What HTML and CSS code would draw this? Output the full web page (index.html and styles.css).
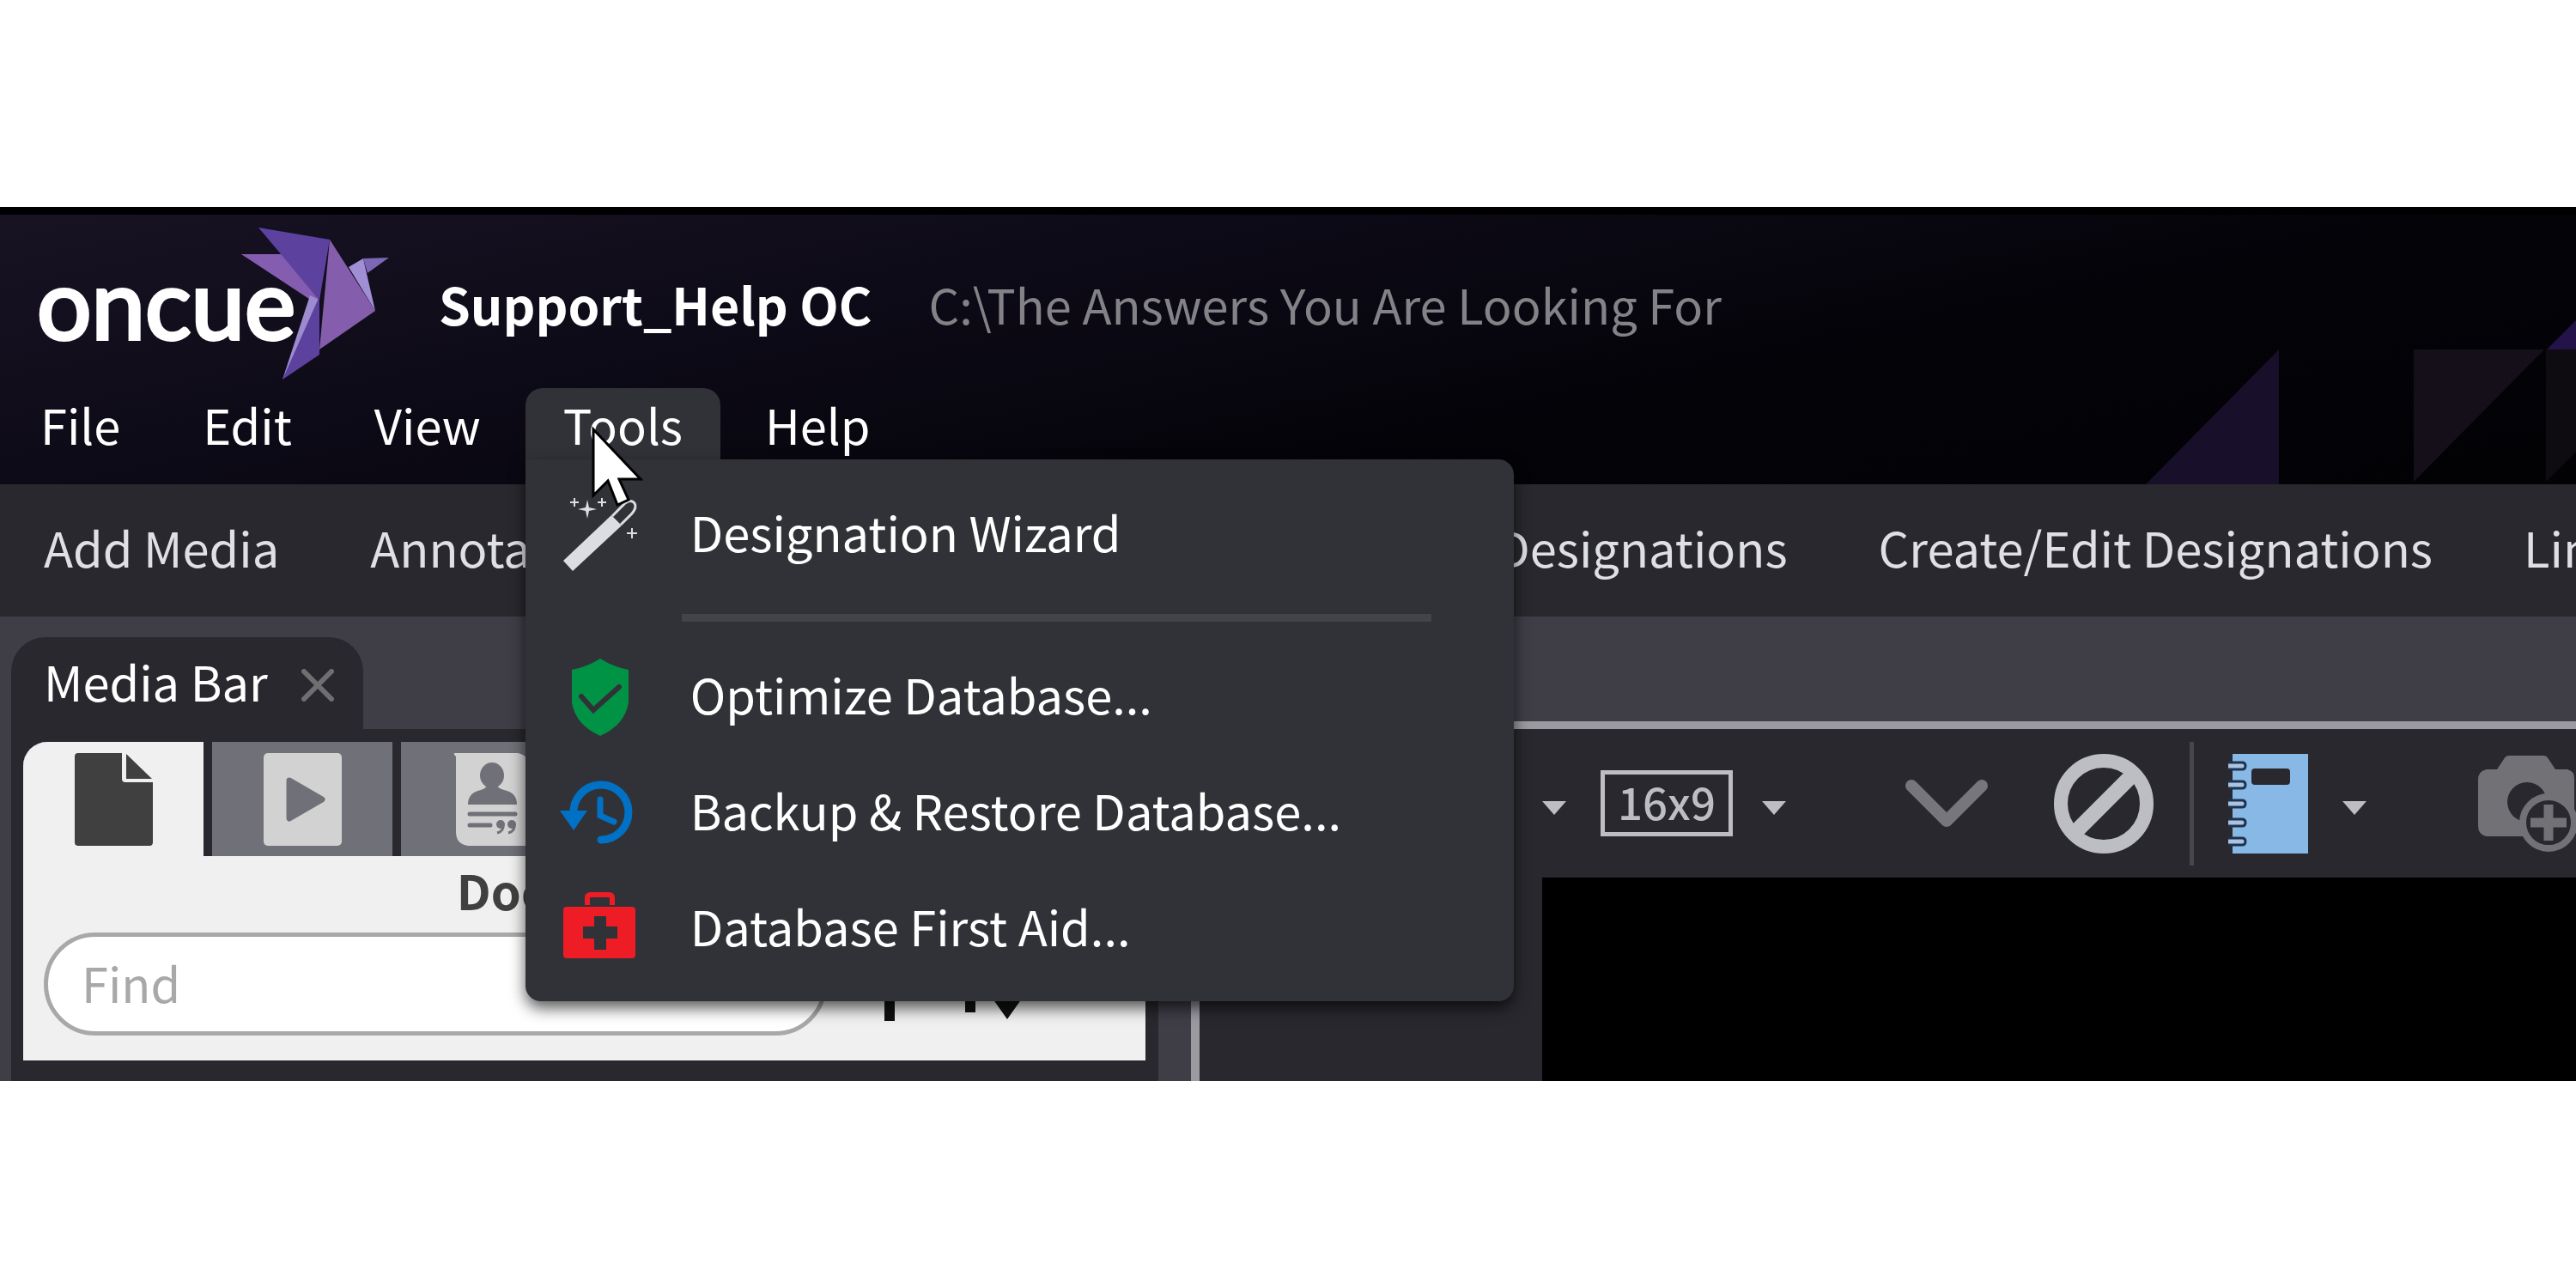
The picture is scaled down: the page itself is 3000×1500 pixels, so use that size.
FILE: index.html
```html
<!DOCTYPE html>
<html lang="en">
<head>
<meta charset="utf-8">
<title>Support_Help OC</title>
<link rel="stylesheet" href="styles.css">
</head>
<body>
<div class="app">
  <header class="header">
    <svg class="facets" viewBox="0 0 501 200" aria-hidden="true">
      <path d="M0 200L155 43V200Z" fill="#180f2b"/>
      <path d="M312 43H464L312 197Z" fill="#150f19"/>
      <path d="M466 43H501V162L466 197Z" fill="#0e0c10"/>
      <path d="M467 43L501 9V43Z" fill="#24134a"/>
    </svg>
    <div class="title-row">
      <svg class="logo" viewBox="0 0 420 190" role="img" aria-label="oncue">
        <text x="1" y="136" class="logo-text">oncue</text>
        <g transform="translate(-42 -259)">
          <path d="M281 296H330L366 344L361 345Z" fill="#845cb0"/>
          <path d="M281 296H330L372 348V356Z" fill="#845cb0"/>
          <path d="M361 344L372 349V368L329 442Z" fill="#9d8bd0"/>
          <path d="M301 265L384 279L372 350L328 297Z" fill="#5c419f"/>
          <path d="M372 345V413L329 442Z" fill="#5c419f"/>
          <path d="M406 311L423 301L437 362Z" fill="#a08fd4"/>
          <path d="M423 301L453 300L428 318Z" fill="#7b67b4"/>
          <path d="M384 279L437 362L372 407Z" fill="#855dad"/>
        </g>
      </svg>
      <h1 class="project">Support_Help OC</h1>
      <span class="path">C:\The Answers You Are Looking For</span>
    </div>
    <nav class="menubar" aria-label="Main menu">
      <button class="menu" type="button">File</button>
      <button class="menu" type="button">Edit</button>
      <button class="menu" type="button">View</button>
      <div class="menu-holder">
        <button class="menu menu-open" type="button" aria-expanded="true">Tools</button>
        <div class="dropdown" role="menu">
          <button class="entry" type="button" role="menuitem">
            <svg class="entry-icon" viewBox="0 0 96 100" aria-hidden="true">
              <path d="M6 84L62 31L74 43L17 96Z" fill="#dcdde3"/>
              <path d="M63 32L78 17Q85 12 89 17Q92 22 86 29L73 42" fill="none" stroke="#dcdde3" stroke-width="3"/>
              <path d="M34 13L36 22L45 24L36 26L34 35L32 26L23 24L32 22Z" fill="#dcdde3"/>
              <path d="M19 11V21M14 16H24M51 11V21M46 16H56M86 46V58M80 52H92" stroke="#dcdde3" stroke-width="2"/>
            </svg>
            Designation Wizard
          </button>
          <hr class="divider">
          <button class="entry" type="button" role="menuitem">
            <svg class="entry-icon" viewBox="0 0 96 100" aria-hidden="true">
              <path d="M49 9Q65 19 82 22V60Q78 86 49 99Q20 86 16 60V22Q33 19 49 9Z" fill="#009245"/>
              <path d="M27 53L41 69L71 42" fill="none" stroke="#313237" stroke-width="6" stroke-linecap="round"/>
            </svg>
            Optimize Database...
          </button>
          <button class="entry" type="button" role="menuitem">
            <svg class="entry-icon" viewBox="0 0 96 100" aria-hidden="true">
              <path d="M18 55A32 32 0 1 1 50 85" fill="none" stroke="#0071c5" stroke-width="9" stroke-linecap="round"/>
              <path d="M2 51H34L18 74Z" fill="#0071c5"/>
              <path d="M49 38V57L65 64" fill="none" stroke="#0071c5" stroke-width="7" stroke-linecap="round"/>
            </svg>
            Backup &amp; Restore Database...
          </button>
          <button class="entry" type="button" role="menuitem">
            <svg class="entry-icon" viewBox="0 0 96 100" aria-hidden="true">
              <path d="M34 26V18Q34 14 38 14H59Q63 14 63 18V26" fill="none" stroke="#ee1c25" stroke-width="6"/>
              <rect x="6" y="28" width="84" height="60" rx="4" fill="#ee1c25"/>
              <path d="M49 39V78M29 58H69" stroke="#313237" stroke-width="14"/>
            </svg>
            Database First Aid...
          </button>
        </div>
        <svg class="pointer" viewBox="-3 -6 66 100" aria-hidden="true">
          <path d="M0 0V77L17 60L28 88L41 82L30 58H55Z" fill="#fff" stroke="#000" stroke-width="3"/>
        </svg>
      </div>
      <button class="menu" type="button">Help</button>
    </nav>
  </header>

  <nav class="ribbon" aria-label="Actions">
    <a class="action" href="#">Add Media</a>
    <a class="action action-wide" href="#">Annotate</a>
    <a class="action" href="#">Designations</a>
    <a class="action" href="#">Create/Edit Designations</a>
    <a class="action" href="#">Link</a>
  </nav>

  <main class="workspace">
    <section class="media">
      <div class="dock-tab">
        <span class="dock-name">Media Bar</span>
        <button class="icon-button" type="button" aria-label="Close">
          <svg width="38" height="38" viewBox="0 0 38 38"><path d="M3 3L35 35M35 3L3 35" stroke="#6f6f72" stroke-width="6" stroke-linecap="round"/></svg>
        </button>
      </div>
      <div class="media-frame">
        <div class="media-body">
          <div class="types">
            <button class="type type-on" type="button" aria-label="Documents">
              <svg width="91" height="108" viewBox="0 0 91 108"><path d="M4 0H55V30Q55 34 59 34H91V104Q91 108 87 108H4Q0 108 0 104V4Q0 0 4 0Z" fill="#404040"/><path d="M60 1L90 30H60Z" fill="#404040"/></svg>
            </button>
            <button class="type" type="button" aria-label="Videos">
              <svg width="91" height="108" viewBox="0 0 91 108"><rect width="91" height="108" rx="5" fill="#d2d2d2"/><path d="M30 32L68 54L30 76Z" fill="#707078" stroke="#707078" stroke-width="7" stroke-linejoin="round"/></svg>
            </button>
            <button class="type" type="button" aria-label="Transcripts">
              <svg width="86" height="108" viewBox="0 0 86 108"><path d="M-2 0H74Q86 2 86 14V108H16Q2 106 2 92V4Z" fill="#d2d2d2"/><ellipse cx="44" cy="26" rx="14" ry="15" fill="#707078"/><path d="M39 36H49Q50 41 58 43Q73 46 73 60H16Q16 46 31 43Q38 41 39 36Z" fill="#707078"/><path d="M18 71H71M18 84H42" stroke="#707078" stroke-width="5" stroke-linecap="round"/><g fill="none" stroke="#707078" stroke-width="3"><path d="M57 83Q58 91 50 93M70 83Q71 91 63 93"/></g><circle cx="54" cy="83" r="5" fill="#707078"/><circle cx="67" cy="83" r="5" fill="#707078"/></svg>
            </button>
          </div>
          <h2 class="media-title">Documents</h2>
          <div class="search">
            <input class="find" type="text" placeholder="Find" aria-label="Find">
            <button class="icon-button" type="button" aria-label="Add">
              <svg width="86" height="86" viewBox="0 0 86 86"><path d="M43 0V86M0 43H86" stroke="#111" stroke-width="12"/></svg>
            </button>
            <button class="icon-button" type="button" aria-label="Sort">
              <svg width="90" height="84" viewBox="0 0 90 84"><path d="M21 14V75M64 0V60" stroke="#111" stroke-width="12"/><path d="M40 49H88L64 83ZM0 34H42L21 0Z" fill="#111"/></svg>
            </button>
          </div>
        </div>
      </div>
    </section>

    <section class="viewer">
      <div class="toolbar">
        <button class="icon-button" type="button" aria-label="Layout options"><svg class="caret" viewBox="0 0 28 16"><path d="M0 0H28L14 16Z" fill="#bdbdc4"/></svg></button>
        <button class="ratio" type="button">16x9</button>
        <button class="icon-button" type="button" aria-label="Ratio options"><svg class="caret" viewBox="0 0 28 16"><path d="M0 0H28L14 16Z" fill="#bdbdc4"/></svg></button>
        <button class="icon-button chevron" type="button" aria-label="Expand"><svg width="98" height="60" viewBox="0 0 98 60"><path d="M8 9L49 50L90 9" fill="none" stroke="#76767b" stroke-width="14" stroke-linecap="round" stroke-linejoin="round"/></svg></button>
        <button class="icon-button" type="button" aria-label="Clear"><svg width="116" height="116" viewBox="0 0 116 116"><g fill="none" stroke="#bdbdc4" stroke-width="16"><circle cx="58" cy="58" r="50"/><path d="M27 89L89 27" stroke-width="18"/></g></svg></button>
        <span class="rule"></span>
        <button class="icon-button" type="button" aria-label="Notebook">
          <svg width="93" height="116" viewBox="0 0 93 116"><path d="M5 0H93V116H5Z" fill="#88b8e6"/><rect x="27" y="17" width="45" height="19" rx="4" fill="#29282e"/>
          <path d="M0 10H16Q20 10 20 14Q20 18 16 18H0M0 32H16Q20 32 20 36Q20 40 16 40H0M0 54H16Q20 54 20 58Q20 62 16 62H0M0 76H16Q20 76 20 80Q20 84 16 84H0M0 98H16Q20 98 20 102Q20 106 16 106H0" fill="#a9c3e0" stroke="#1d3350" stroke-width="3"/></svg>
        </button>
        <button class="icon-button" type="button" aria-label="Notebook options"><svg class="caret" viewBox="0 0 28 16"><path d="M0 0H28L14 16Z" fill="#bdbdc4"/></svg></button>
        <button class="icon-button camera" type="button" aria-label="Add snapshot">
          <svg width="118" height="116" viewBox="0 0 118 116"><path d="M36 2H76Q80 2 82 6L90 18H104Q112 20 112 28V96H10Q0 94 0 84V30Q0 20 10 18H22L30 6Q32 2 36 2Z" fill="#717176"/><circle cx="57" cy="56" r="23" fill="#29282e"/><circle cx="82" cy="80" r="30" fill="#29282e" stroke="#717176" stroke-width="8"/><path d="M82 59V101M61 80H103" stroke="#717176" stroke-width="11"/></svg>
        </button>
      </div>
      <div class="stage"></div>
    </section>
  </main>
</div>
</body>
</html>
```
FILE: styles.css
```css
* {
  box-sizing: border-box;
}

body {
  margin: 0;
  min-height: 100vh;
  display: flex;
  flex-direction: column;
  justify-content: center;
  background: #fff;
  color: #fff;
  font-family: "Noto Sans CJK SC", "Noto Sans", sans-serif;
  font-size: 56px;
  line-height: 72px;
  white-space: nowrap;
}

button,
input {
  font: inherit;
  color: inherit;
}

button {
  border: 0;
  padding: 0;
  background: none;
}

svg {
  display: block;
  flex: none;
}

.app {
  overflow: hidden;
  background: #29282e;
}

/* Header */
.header {
  position: relative;
  padding-bottom: 29px;
  border-top: 9px solid #000;
  background: linear-gradient(168deg, #181323 0%, #0d0a17 35%, #040308 65%, #020205 100%);
}

.facets {
  position: absolute;
  right: 0;
  bottom: 0;
  height: 200px;
}

.title-row {
  position: relative;
  display: flex;
  align-items: center;
  height: 202px;
  padding: 6px 42px 0;
}

.logo {
  width: 420px;
  height: 190px;
}

.logo-text {
  font-family: Lato, sans-serif;
  font-size: 112px;
  font-weight: 400;
  fill: #fff;
  stroke: #fff;
  stroke-width: 4px;
}

.project {
  margin: 0 66px 0 49px;
  font-size: 59px;
  font-weight: 700;
}

.path {
  color: #838287;
}

.menubar {
  position: relative;
  z-index: 2;
  display: flex;
  gap: 8px;
  padding-left: 3px;
}

.menu {
  height: 83px;
  padding: 0 44px;
}

.menu-holder {
  position: relative;
}

.menu-open {
  border-radius: 20px 20px 0 0;
  background: #313237;
}

.dropdown {
  position: absolute;
  top: 83px;
  left: 0;
  width: 1151px;
  padding: 16px 0 21px;
  border-radius: 0 18px 18px 18px;
  background: #313237;
  box-shadow: 0 8px 18px rgba(0, 0, 0, 0.65);
}

.entry {
  display: flex;
  align-items: center;
  gap: 58px;
  width: 100%;
  height: 135px;
  padding-left: 38px;
}

.entry-icon {
  width: 96px;
  height: 100px;
}

.divider {
  height: 9px;
  margin: 29px 96px 16px 182px;
  border: 0;
  background: #444348;
}

.pointer {
  position: absolute;
  top: 42px;
  left: 76px;
  width: 66px;
  height: 100px;
}

/* Ribbon */
.ribbon {
  display: flex;
  gap: 106px;
  align-items: center;
  height: 154px;
  padding: 0 51px 8px;
  background: #29282e;
}

.action {
  flex: none;
  color: #dfdfe6;
  text-decoration: none;
}

.action-wide {
  width: 1206px;
}

/* Workspace */
.workspace {
  display: flex;
  background: #3f3e47;
}

.media {
  flex: none;
  width: 1336px;
  margin: 24px 38px 0 13px;
}

.dock-tab {
  display: flex;
  align-items: center;
  justify-content: space-between;
  width: 410px;
  height: 107px;
  padding: 4px 34px 0 38px;
  border-radius: 40px 40px 0 0;
  background: #29282e;
}

.dock-name {
  padding-bottom: 10px;
}

.media-frame {
  padding: 15px 15px 24px 14px;
  background: #29282e;
}

.media-body {
  padding-bottom: 29px;
  border-radius: 28px 0 0 0;
  background: #f0f0f0;
  overflow: hidden;
}

.types {
  display: flex;
  gap: 10px;
  background: #29282e;
}

.type {
  display: flex;
  align-items: center;
  justify-content: center;
  width: 210px;
  height: 133px;
  background: #707078;
}

.type-on {
  background: #f0f0f0;
}

.media-title {
  margin: 0;
  padding: 3px 0 14px 16px;
  color: #404040;
  font-size: 56px;
  font-weight: 700;
  text-align: center;
}

.search {
  display: flex;
  align-items: center;
  gap: 30px;
  padding-left: 24px;
}

.find {
  width: 912px;
  height: 120px;
  padding: 0 39px 6px;
  border: 5px solid #a8a8a8;
  border-radius: 60px;
  outline: 0;
  background: #fff;
}

.find::placeholder {
  color: #a8a8a8;
  opacity: 1;
}

/* Viewer */
.viewer {
  flex: 1;
  min-width: 0;
  display: flex;
  flex-direction: column;
  margin-top: 122px;
  border-top: 9px solid #9b9aa1;
  border-left: 10px solid #9b9aa1;
  background: #29282e;
}

.toolbar {
  display: flex;
  align-items: center;
  gap: 40px;
  height: 173px;
  padding-left: 399px;
}

.toolbar > * {
  flex: none;
}

.caret {
  width: 28px;
  height: 16px;
  margin-top: 10px;
}

.ratio {
  width: 154px;
  height: 77px;
  margin-right: -6px;
  padding-bottom: 6px;
  border: 5px solid #bdbdc4;
  color: #bdbdc4;
  font-size: 51px;
  font-weight: 500;
  line-height: 60px;
}

.chevron {
  margin: 0 36px 0 98px;
}

.rule {
  width: 5px;
  height: 144px;
  margin-left: 2px;
  background: #47464b;
}

.camera {
  margin-left: 90px;
}

.stage {
  flex: 1;
  margin-left: 399px;
  background: #000;
}
```
